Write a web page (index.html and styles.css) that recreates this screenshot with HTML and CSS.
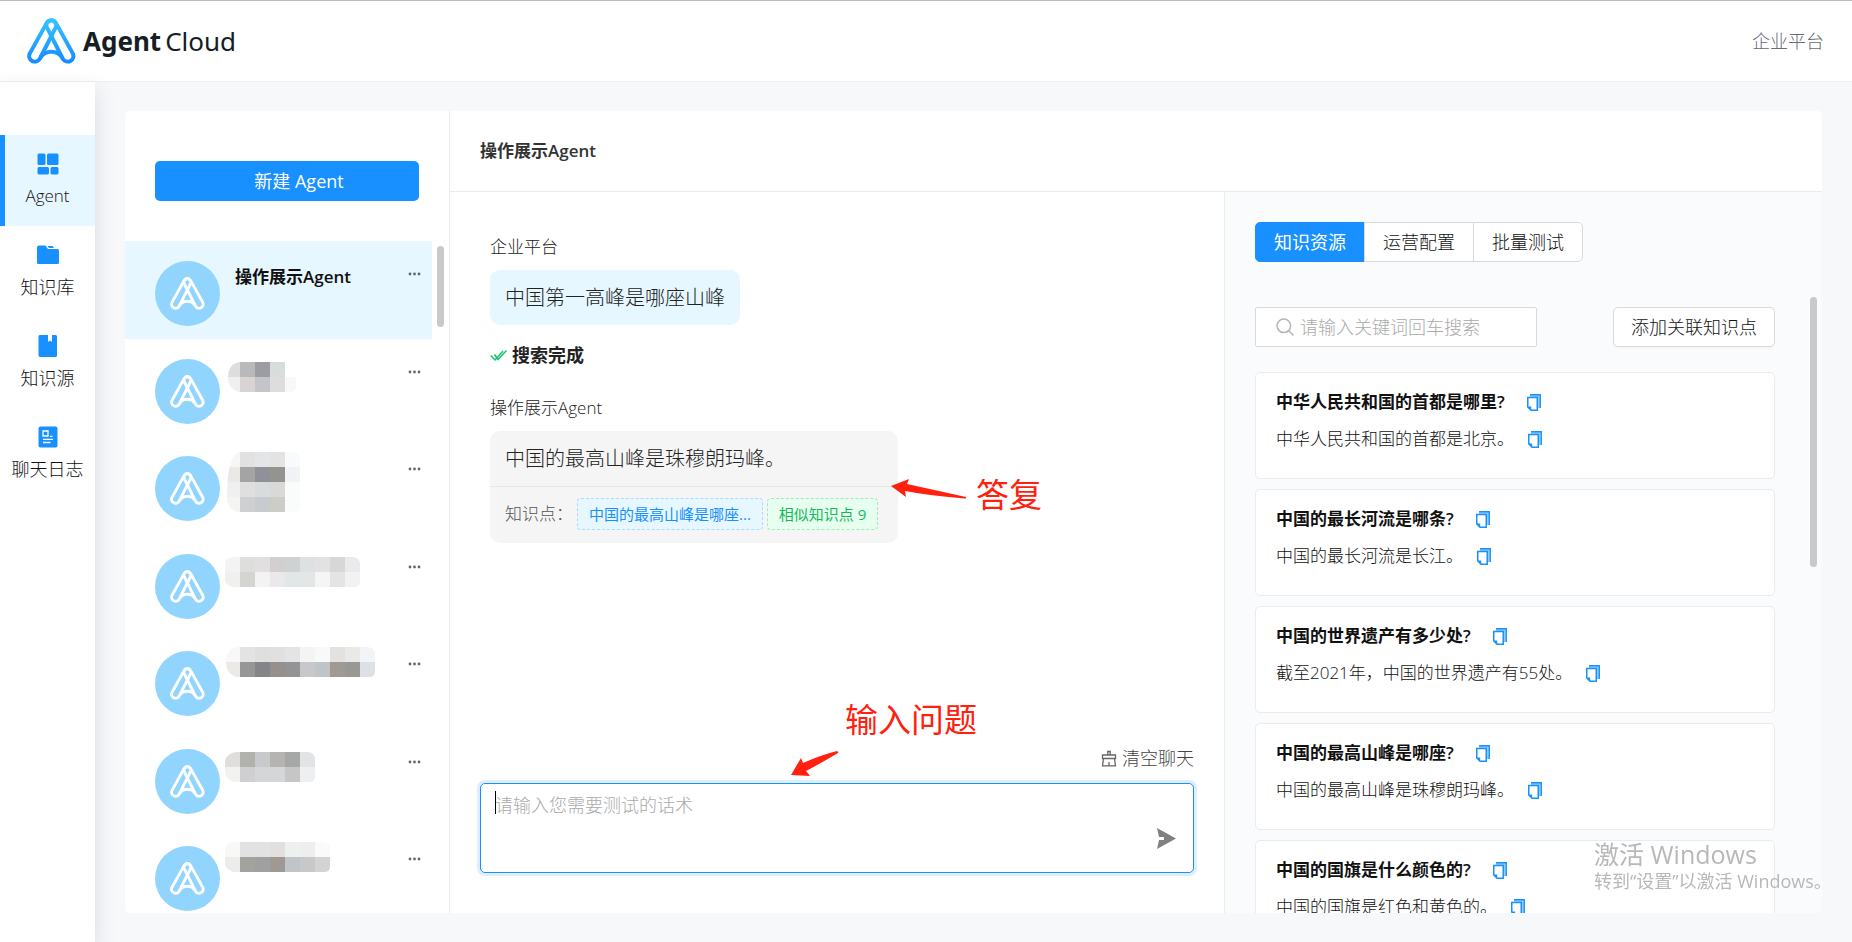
FILE: index.html
```html
<!DOCTYPE html>
<html lang="zh-CN">
<head>
<meta charset="utf-8">
<title>Agent Cloud</title>
<link rel="stylesheet" href="styles.css">
</head>
<body>
<svg class="sprite" aria-hidden="true">
  <defs>
    <linearGradient id="brand" x1="0" y1="0" x2="0" y2="46" gradientUnits="userSpaceOnUse">
      <stop offset="0" stop-color="#36c6ff"/><stop offset="1" stop-color="#1688ff"/>
    </linearGradient>
    <symbol id="mark" viewBox="0 0 49 46">
      <g fill="none" stroke-width="4" stroke-linejoin="round">
        <path d="M19.9 4.65 2.7 35.6A5.7 5.7 0 0 0 12.7 41L28.7 9.35A5 5 0 0 0 19.9 4.65Z"/>
        <path d="M28.7 4.65 45.9 35.6A5.7 5.7 0 0 1 35.9 41L19.9 9.35A5 5 0 0 1 28.7 4.65Z"/>
        <path d="M13.5 39.5Q17 33.8 24.3 33.8T35.1 39.5"/>
      </g>
    </symbol>
    <symbol id="copy" viewBox="0 0 14 17">
      <path d="M3 0H14V14H11V3H3Z" fill="#91cbff"/>
      <path d="M3 .75H13.25V14" fill="none" stroke="#1890ff" stroke-width="1.3"/>
      <path d="M.75 3.5H10.25V16.25H4L.75 13Z" fill="#fff" stroke="#1890ff" stroke-width="1.5"/>
      <path d="M.75 12.5H4.2V16.2Z" fill="#1890ff"/>
    </symbol>
    <symbol id="dots" viewBox="0 0 13 4">
      <circle cx="2" cy="2" r="1.4"/><circle cx="6.5" cy="2" r="1.4"/><circle cx="11" cy="2" r="1.4"/>
    </symbol>
  </defs>
</svg>

<header class="topbar">
  <a class="brand" href="#">
    <svg class="brand-mark" stroke="url(#brand)"><use href="#mark"/></svg>
    <span class="brand-name"><b>Agent</b><span>Cloud</span></span>
  </a>
  <span class="account">企业平台</span>
</header>

<div class="shell">
  <nav class="sidebar">
    <a class="nav-item active" href="#">
      <svg viewBox="0 0 22 22" width="22" height="22"><rect x=".5" y=".5" width="8" height="11.500" rx="1.500"/><rect x="10" y=".5" width="11.500" height="11.500" rx="1.500"/><rect x=".5" y="14" width="11.500" height="7.500" rx="1.500"/><rect x="13.500" y="14" width="8" height="7.500" rx="1.500"/></svg>
      <span>Agent</span>
    </a>
    <a class="nav-item" href="#">
      <svg viewBox="0 0 22 22" width="22" height="22"><path d="M2 1.500H8.500L11 5H20.500A1.500 1.500 0 0 1 22 6.500V18.500A1.500 1.500 0 0 1 20.500 20H1.500A1.500 1.500 0 0 1 0 18.500V3.500A2 2 0 0 1 2 1.500ZM10.500 2H15.500L17 4H12Z"/></svg>
      <span>知识库</span>
    </a>
    <a class="nav-item" href="#">
      <svg viewBox="0 0 22 22" width="22" height="22"><path d="M3.500 0H11V7L13 5.500L15 7V0H18.500A1.500 1.500 0 0 1 20 1.500V20.500A1.500 1.500 0 0 1 18.500 22H3A2 2 0 0 1 1.500 20.500V1.500A1.500 1.500 0 0 1 3.500 0Z"/></svg>
      <span>知识源</span>
    </a>
    <a class="nav-item" href="#">
      <svg viewBox="0 0 22 22" width="22" height="22"><rect x="1.500" y=".5" width="19" height="21" rx="2"/><g fill="none" stroke="#fff" stroke-width="1.300"><path d="M6 5H11V10H6ZM13 10.300H15.500M6 13.300H16M6 16.500H13.500"/></g></svg>
      <span>聊天日志</span>
    </a>
  </nav>

  <main class="panel">
    <section class="agents">
      <div class="agents-head"><button class="create" type="button">新建 Agent</button></div>
      <div class="agents-body">
        <ul class="agent-list">
          <li class="agent selected">
            <span class="avatar"><svg><use href="#mark"/></svg></span>
            <strong class="agent-name">操作展示Agent</strong>
            <button class="more" type="button" aria-label="更多"><svg><use href="#dots"/></svg></button>
          </li>
        </ul>
        <span class="scroll-thumb"></span>
      </div>
    </section>

    <section class="work">
      <h1 class="work-title">操作展示Agent</h1>
      <div class="work-body">
        <div class="chat">
          <div class="messages">
            <p class="sender">企业平台</p>
            <p class="bubble question">中国第一高峰是哪座山峰</p>
            <p class="status">
              <svg viewBox="0 0 17 13" width="17" height="13" fill="none" stroke="#16c36b" stroke-width="1.500"><path d="M.8 6.500 5 11 13 2M4.500 5.500 8 10.500 16.500 1.500"/></svg>
              搜索完成
            </p>
            <p class="sender">操作展示Agent</p>
            <div class="bubble answer">
              <p class="answer-text">中国的最高山峰是珠穆朗玛峰。</p>
              <div class="sources">
                <span>知识点：</span>
                <a class="tag blue" href="#">中国的最高山峰是哪座...</a>
                <a class="tag green" href="#">相似知识点 9</a>
              </div>
            </div>
          </div>
          <div class="composer">
            <button class="clear" type="button">
              <svg viewBox="0 0 16 17" width="16" height="17" fill="none" stroke="#666" stroke-width="1.300"><path d="M6.800 5V1.500H9.200V5M1.500 5H14.500V8.500H1.500ZM2.500 8.500 1.500 15.800H14.500L13.500 8.500M8 12V15.500"/></svg>
              清空聊天
            </button>
            <div class="field">
              <textarea aria-label="测试话术" placeholder="请输入您需要测试的话术"></textarea>
              <span class="caret"></span>
              <button class="send" type="button" aria-label="发送"><svg viewBox="0 0 19 21" width="19" height="21"><path d="M0 0 19 10.500 0 21 2 12H7V9H2Z"/></svg></button>
            </div>
          </div>
          <span class="note note-answer">答复</span>
          <svg class="arrow arrow-answer" viewBox="0 0 76 20" width="76" height="20"><path d="M0 7 18 0 16 5Q48 12 75 18Q76 20 74 19.500 40 17 14 12L15 18Z"/></svg>
          <span class="note note-input">输入问题</span>
          <svg class="arrow arrow-input" viewBox="0 0 48 25" width="48" height="25"><path d="M0 24 10 7 12 12Q30 4 46 0 48 1 47 2 32 11 15 20L19 25Z"/></svg>
        </div>

        <aside class="knowledge">
          <div class="tabs">
            <button class="tab current" type="button">知识资源</button>
            <button class="tab" type="button">运营配置</button>
            <button class="tab" type="button">批量测试</button>
          </div>
          <div class="tools">
            <label class="search">
              <svg viewBox="0 0 18 18" width="18" height="18" fill="none" stroke="#b5b5b5" stroke-width="1.500"><circle cx="7.800" cy="7.800" r="6.800"/><path d="M12.500 12.500 17.500 17.500"/></svg>
              <input type="text" aria-label="关键词" placeholder="请输入关键词回车搜索">
            </label>
            <button class="add" type="button">添加关联知识点</button>
          </div>
          <div class="cards">
            <article class="card">
              <h2>中华人民共和国的首都是哪里?<svg class="copy"><use href="#copy"/></svg></h2>
              <p>中华人民共和国的首都是北京。<svg class="copy"><use href="#copy"/></svg></p>
            </article>
            <article class="card">
              <h2>中国的最长河流是哪条?<svg class="copy"><use href="#copy"/></svg></h2>
              <p>中国的最长河流是长江。<svg class="copy"><use href="#copy"/></svg></p>
            </article>
            <article class="card">
              <h2>中国的世界遗产有多少处?<svg class="copy"><use href="#copy"/></svg></h2>
              <p>截至2021年，中国的世界遗产有55处。<svg class="copy"><use href="#copy"/></svg></p>
            </article>
            <article class="card">
              <h2>中国的最高山峰是哪座?<svg class="copy"><use href="#copy"/></svg></h2>
              <p>中国的最高山峰是珠穆朗玛峰。<svg class="copy"><use href="#copy"/></svg></p>
            </article>
            <article class="card">
              <h2>中国的国旗是什么颜色的?<svg class="copy"><use href="#copy"/></svg></h2>
              <p>中国的国旗是红色和黄色的。<svg class="copy"><use href="#copy"/></svg></p>
            </article>
          </div>
          <span class="scroll-thumb"></span>
        </aside>
      </div>
    </section>
  </main>
</div>

<div class="watermark"><p class="wm-title">激活 Windows</p><p>转到“设置”以激活 Windows。</p></div>
<script src="agents.js"></script>
</body>
</html>
```
FILE: agents.js
```js
// Each hidden name is a grid of 15px cells; x starts 5px right of the avatar.
// top: offset inside the row, left/right: clipped edges, rows: cell colours.
const masked = [
  { top: 23, left: 8, right: 76, rows: ['dddedb b9b8bb 9c9da2 d9dcdc ffffff', 'eef0ef d8d4d4 c4c5ca dedcdc f7f8fa'] },
  { top: 16, left: 7, right: 80, rows: ['f6f6f6 e1e1e1 e3e5e7 e3e3e1 f9fafc', 'ebe9e5 a4a4a4 8f9098 94938f f1f2f5', 'f0f0f0 dfdfdf d9dcdd d9d9d7 fafbfb', 'f4f4f3 cfd0d2 c8cccf cdcdc8 fafbfb'] },
  { top: 23, left: 2, right: 140, rows: ['f3f3f3 dededd e1dfe0 d2cfd0 d0d1d3 dde1e2 e2e2e3 d7d7d7 eaeaec', 'f0f0ef d4d4d1 f3f3f3 eae8ea e1e6e8 e2e6e4 f5f5f3 e4e4e4 f2f2f4'] },
  { top: 16, left: 6, right: 155, rows: ['f8f8f8 e3e3e3 dfdfdf e0e0e0 e4e4e5 f4f4f4 f9f9f9 e3e2e0 e9e9e8 f3f4f7', 'ebeae6 969694 858589 968f8c 929395 c8c8ca bfc4c7 a09a95 989897 dde0e6'] },
  { top: 23, left: 4, right: 95, rows: ['dfdedc b1b2ad c8c9cd b6b4b0 a6a8a7 e2e3e5', 'f2f2f1 cfcfd1 d5d6d8 d5d6d8 c6c6c6 eeeff1'] },
  { top: 16, left: 3, right: 110, rows: ['f8f8f7 e2e2e2 e2e2e2 e1e0df eeefef ecefed fafafa', 'ececeb a3a29f 9fa0a2 a09993 bfc5c9 c8c8c9 d2d3d4'] }
];

const list = document.querySelector('.agent-list');
masked.forEach((m, i) => {
  const h = m.rows.length * 15;
  const cells = m.rows.map((row, r) => row.split(' ').map((c, k) =>
    `<rect x="${5 + k * 15}" y="${m.top + r * 15}" width="15" height="15" fill="#${c}"/>`).join('')).join('');
  const l = m.left, t = m.top, rt = m.right;
  const shape = `M${l + 14} ${t}H${rt - 8}Q${rt} ${t} ${rt} ${t + 8}V${t + h - 6}Q${rt} ${t + h} ${rt - 6} ${t + h}H${l + 10}Q${l} ${t + h - 4} ${l} ${t + h - 14}Q${l} ${t} ${l + 14} ${t}Z`;
  list.insertAdjacentHTML('beforeend', `<li class="agent">
    <span class="avatar"><svg><use href="#mark"/></svg></span>
    <svg class="masked" viewBox="0 0 180 80" shape-rendering="crispEdges"><clipPath id="m${i}"><path d="${shape}"/></clipPath><g clip-path="url(#m${i})">${cells}</g></svg>
    <button class="more" type="button" aria-label="更多"><svg><use href="#dots"/></svg></button></li>`);
});
```
FILE: styles.css
```css
* { box-sizing: border-box; }
body, h1, h2, p, ul { margin: 0; padding: 0; }
body {
  display: flex;
  flex-direction: column;
  height: 100vh;
  overflow: hidden;
  background: #f7f8fa;
  color: #111;
  font: 300 18px/28px "Open Sans", "Noto Sans CJK SC", sans-serif;
}
button, input, textarea { font: inherit; color: inherit; }
button { cursor: pointer; }
a { color: inherit; text-decoration: none; }
.sprite { position: absolute; width: 0; height: 0; }

.topbar {
  display: flex;
  align-items: center;
  justify-content: space-between;
  flex: none;
  height: 82px;
  padding: 0 28px 0 27px;
  background: #fff;
  border-top: 1px solid #bbb;
  border-bottom: 1px solid #eef0f3;
}
.brand { display: flex; align-items: center; gap: 7px; }
.brand-mark { width: 49px; height: 46px; }
.brand-name { display: flex; gap: 4px; color: #161d24; font-family: "Noto Sans", sans-serif; font-size: 26px; line-height: 46px; font-weight: 400; }
.account { color: #666b74; }

.shell { display: flex; flex: 1; min-height: 0; }
.sidebar {
  flex: none;
  width: 95px;
  padding-top: 53px;
  background: #fff;
  box-shadow: 0 8px 20px rgba(30, 40, 90, .14);
}
.nav-item {
  display: flex;
  flex-direction: column;
  align-items: center;
  gap: 7px;
  height: 91px;
  padding-top: 18px;
  text-align: center;
}
.nav-item svg { fill: #1890ff; }
.nav-item.active { background: #e6f7ff; box-shadow: inset 5px 0 #1890ff; font-size: 17px; }

.panel {
  display: flex;
  flex: 1;
  min-width: 0;
  margin: 29px 30px 29px 30px;
  overflow: hidden;
  border-radius: 5px;
  background: #fff;
}
.agents { display: flex; flex-direction: column; flex: none; width: 325px; border-right: 1px solid #ebebeb; }
.agents-head { padding: 50px 30px 40px; }
.create {
  width: 100%;
  height: 40px;
  padding: 0 0 0 24px;
  border: 0;
  border-radius: 5px;
  background: #1890ff;
  color: #fff;
  font-weight: 400;
}
.agents-body { position: relative; flex: 1; min-height: 0; overflow: hidden; padding-right: 17px; }
.agent-list { display: grid; grid-template-rows: repeat(7, 1fr); height: 683px; list-style: none; }
.agent { display: flex; align-items: flex-start; padding: 20px 11px 0 30px; }
.agent.selected { background: #e6f7ff; }
.avatar { display: flex; align-items: center; justify-content: center; flex: none; width: 65px; height: 65px; border-radius: 50%; background: #91d5ff; }
.avatar svg { width: 35px; height: 33px; stroke: #fff; }
.agent-name { margin-left: 15px; font-size: 17px; line-height: 32px; font-weight: 600; }
.masked { flex: none; width: 180px; height: 80px; margin: -20px -40px 0 0; }
.more { display: flex; margin-left: auto; padding: 11px 0; border: 0; background: none; }
.more svg { width: 13px; height: 4px; fill: #666; }
.scroll-thumb { position: absolute; border-radius: 4px; background: #c9c9c9; }
.agents .scroll-thumb { top: 5px; right: 5px; width: 7px; height: 81px; }

.work { display: flex; flex-direction: column; flex: 1; min-width: 0; }
.work-title { flex: none; padding: 0 30px; border-bottom: 1px solid #ebebeb; font-size: 17px; line-height: 80px; font-weight: 600; color: #333; }
.work-body { display: flex; flex: 1; min-height: 0; }
.chat { position: relative; display: flex; flex-direction: column; justify-content: space-between; flex: 1; padding: 40px 30px; }
.messages { display: flex; flex-direction: column; align-items: flex-start; padding: 2px 10px; color: #222; }
.sender { font-size: 17px; line-height: 26px; }
.bubble { border-radius: 10px; font-size: 20px; }
.question { margin: 10px 0 17px; padding: 14px 15px; line-height: 27px; background: #e6f7ff; }
.status { display: flex; align-items: center; gap: 5px; margin-bottom: 27px; line-height: 26px; font-weight: 600; }
.answer { margin-top: 10px; background: #f5f5f5; }
.answer-text { padding: 14px 15px; line-height: 27px; }
.sources { display: flex; align-items: center; gap: 4px; padding: 11px 20px 13px 15px; border-top: 1px solid #e8e8e8; font-size: 17px; color: #555; }
.tag { padding: 0 11px; border: 1px dashed; border-radius: 4px; font-size: 15px; line-height: 30px; font-weight: 400; }
.tag.blue { background: #e6f7ff; border-color: #a9dcff; color: #1890ff; }
.tag.green { background: #e6ffee; border-color: #9eecc0; color: #16b85f; }

.composer { display: flex; flex-direction: column; align-items: flex-end; gap: 11px; }
.clear { display: flex; align-items: center; gap: 5px; padding: 0; border: 0; background: none; color: #444; }
.field { position: relative; display: flex; width: 100%; }
textarea {
  flex: 1;
  height: 90px;
  padding: 7px 14px;
  border: 1px solid #1890ff;
  border-radius: 5px;
  outline: 0;
  resize: none;
  background: #fff;
  box-shadow: 0 0 0 3px #dceeff;
}
::placeholder { color: #aaa; opacity: 1; }
.caret { position: absolute; left: 15px; top: 8px; width: 1px; height: 23px; background: #000; }
.send { position: absolute; right: 18px; bottom: 24px; display: flex; padding: 0; border: 0; background: none; }
.send svg { fill: #808080; }

.note { position: absolute; color: #ff2010; font-size: 33px; line-height: 40px; font-weight: 400; white-space: nowrap; }
.note-answer { left: 526px; top: 283px; }
.note-input { left: 395px; bottom: 173px; }
.arrow { position: absolute; fill: #ff2010; }
.arrow-answer { left: 441px; top: 287px; }
.arrow-input { left: 341px; bottom: 137px; }

.knowledge { position: relative; flex: none; width: 598px; padding: 30px 47px 0 30px; overflow: hidden; background: #fafbfd; border-left: 1px solid #ebebeb; }
.tabs { display: flex; }
.tab { height: 40px; padding: 0 18px; margin-left: -1px; border: 1px solid #d9d9d9; background: #fff; }
.tab:first-child { margin-left: 0; border-radius: 5px 0 0 5px; }
.tab:last-child { border-radius: 0 5px 5px 0; }
.tab.current { border-color: #1890ff; background: #1890ff; color: #fff; font-weight: 400; }
.tools { display: flex; justify-content: space-between; margin: 45px 0 25px; }
.search { display: flex; align-items: center; gap: 6px; width: 282px; height: 40px; padding: 0 20px; border: 1px solid #d9d9d9; border-radius: 2px; background: #fff; }
.search input { flex: 1; min-width: 0; padding: 0; border: 0; outline: 0; background: none; }
.add { height: 40px; padding: 0 17px; border: 1px solid #d9d9d9; border-radius: 5px; background: #fff; box-shadow: 0 2px 0 rgba(0, 0, 0, .02); }
.cards { display: grid; gap: 10px; }
.card { display: grid; align-content: start; gap: 11px; height: 107px; padding: 16px 20px; border: 1px solid #ebebeb; border-radius: 5px; background: #fff; }
.card h2, .card p { display: flex; align-items: center; font-size: 17px; line-height: 26px; }
.card h2 { gap: 22px; font-weight: 600; }
.card p { gap: 14px; }
.copy { width: 14px; height: 17px; }
.knowledge .scroll-thumb { top: 105px; right: 5px; width: 7px; height: 270px; }

.watermark { position: fixed; right: 22px; bottom: 48px; width: 236px; color: #b8b8b8; line-height: 25px; font-weight: 400; white-space: nowrap; }
.wm-title { font-size: 25px; line-height: 30px; }
```
